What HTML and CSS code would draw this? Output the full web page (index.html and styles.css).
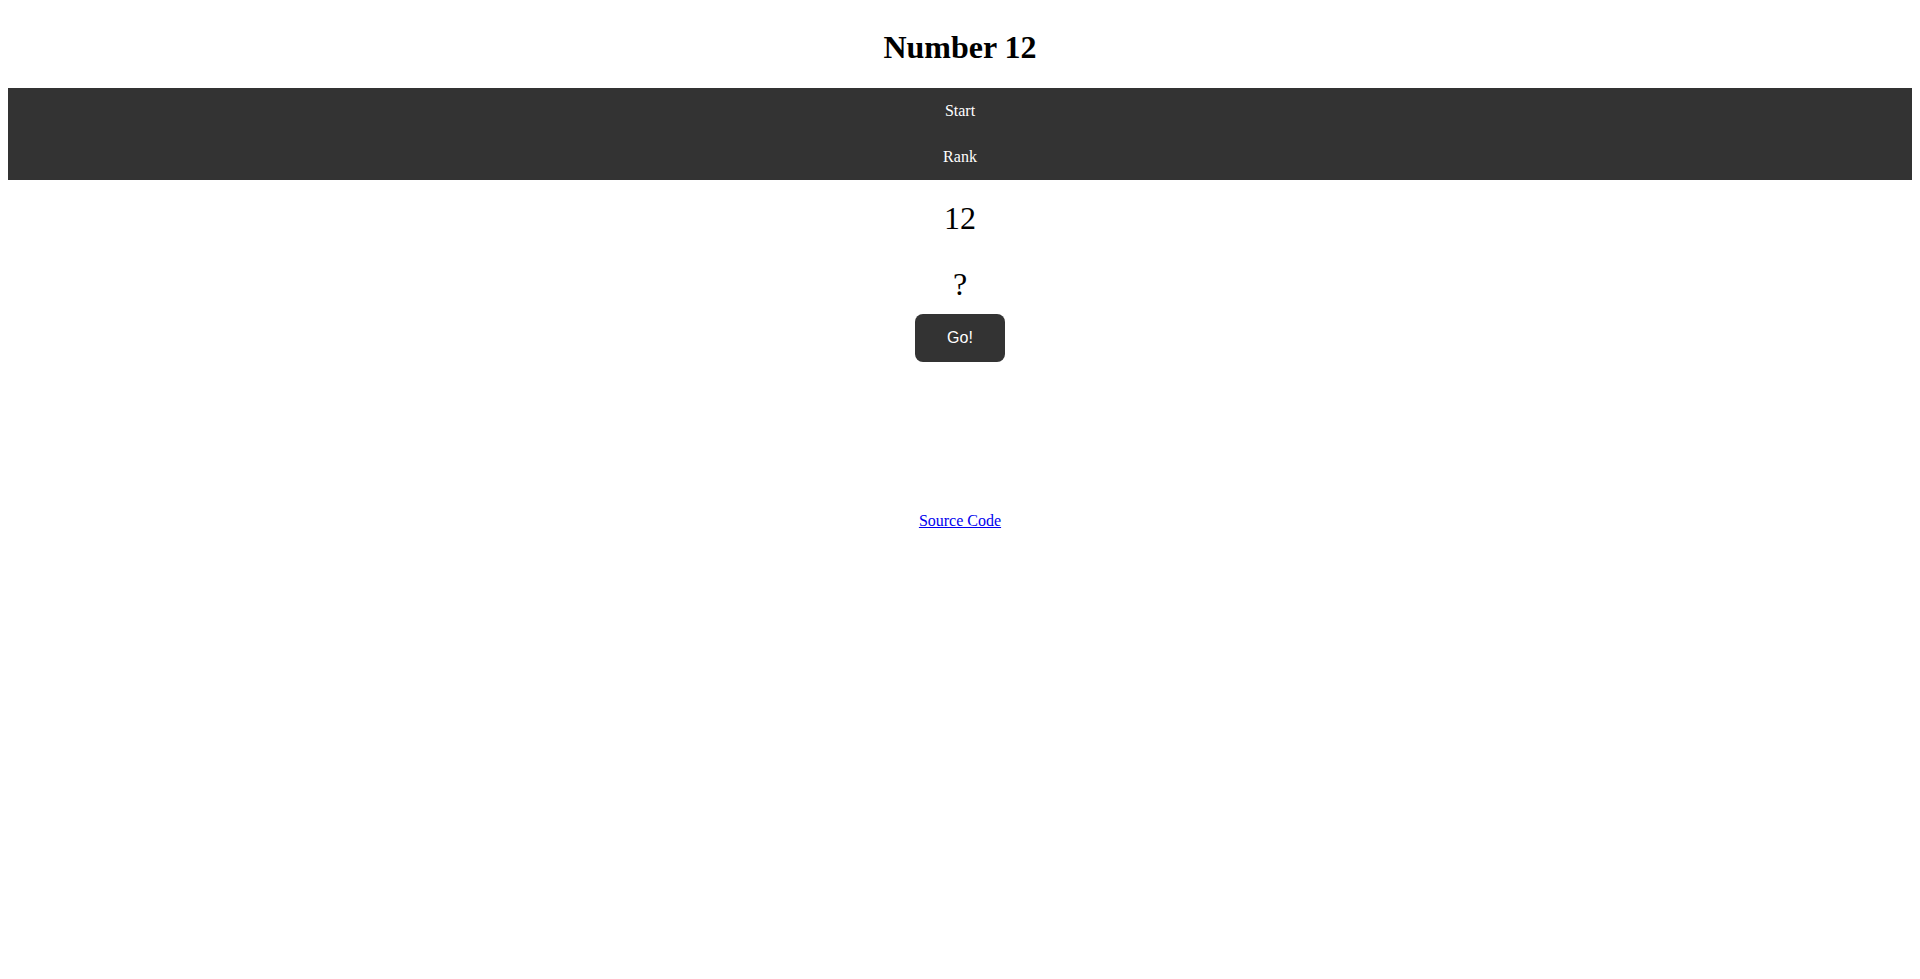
FILE: index.html
```html
<!DOCTYPE html>
<html>
<head>
<meta charset="utf-8">
<title>Number 12</title>
<link rel="stylesheet" href="styles.css">
</head>
<body>
<h1 class="title">Number 12</h1>
<ul class="nav">
  <li><a href="#" class="nav-link">Start</a></li>
  <li><a href="#" class="nav-link">Rank</a></li>
</ul>
<main class="game">
  <p class="target">12</p>
  <p class="guess">?</p>
  <button class="go-btn" type="button">Go!</button>
  <a class="source" href="#">Source Code</a>
</main>
</body>
</html>
```
FILE: styles.css
```css
html, body {
  background: #ffffff;
}
body {
  margin: 0;
  padding: 8px;
  font-family: "Liberation Serif", "Times New Roman", serif;
  font-size: 16px;
  color: #000;
}
.title {
  font-size: 32px;
  font-weight: bold;
  text-align: center;
  margin: 21.44px 0;
  line-height: normal;
}
.nav {
  list-style: none;
  margin: 0;
  padding: 0;
  background: #333333;
  text-align: center;
}
.nav-link {
  display: block;
  color: #ffffff;
  text-decoration: none;
  padding: 14px 16px;
  line-height: normal;
}
.game {
  display: flex;
  flex-direction: column;
  align-items: center;
}
.target {
  font-size: 32px;
  margin: 20px 0 0;
  line-height: normal;
}
.guess {
  font-size: 32px;
  margin: 29.5px 0 0;
  line-height: normal;
}
.go-btn {
  margin-top: 11px;
  background: #333333;
  color: #ffffff;
  border: none;
  border-radius: 8px;
  padding: 15px 32px;
  font-family: "Liberation Sans", Arial, sans-serif;
  font-size: 16px;
  line-height: normal;
}
.source {
  margin-top: 150px;
  color: #0000ee;
  text-decoration: underline;
  line-height: normal;
}
```
